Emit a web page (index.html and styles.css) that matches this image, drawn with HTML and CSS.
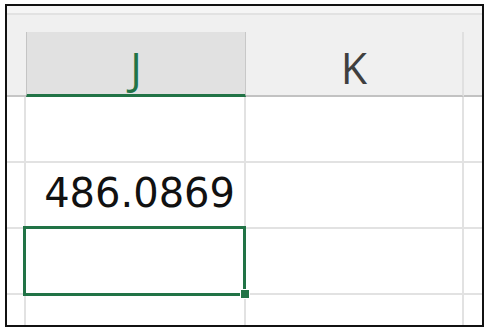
FILE: index.html
```html
<!DOCTYPE html>
<html lang="en">
<head>
  <meta charset="UTF-8" />
  <title>Sheet</title>
  <link rel="stylesheet" href="styles.css">
</head>
<body>
  <div class="frame">
    <div class="topbar"></div>
    <div class="gap"></div>

    <!-- Column headers -->
    <div class="row head">
      <div class="rh"></div>
      <div class="ch selected">J</div>
      <div class="ch">K</div>
      <div class="ch last"></div>
    </div>

    <!-- Cells -->
    <div class="row">
      <div class="rh"></div>
      <div class="cell"></div>
      <div class="cell"></div>
      <div class="cell last"></div>
    </div>
    <div class="row">
      <div class="rh"></div>
      <div class="cell num">486.0869</div>
      <div class="cell"></div>
      <div class="cell last"></div>
    </div>
    <div class="row">
      <div class="rh"></div>
      <div class="cell active"><span class="handle"></span></div>
      <div class="cell"></div>
      <div class="cell last"></div>
    </div>
    <div class="row">
      <div class="rh"></div>
      <div class="cell"></div>
      <div class="cell"></div>
      <div class="cell last"></div>
    </div>
  </div>
</body>
</html>
```

FILE: styles.css
```css
* {
  box-sizing: border-box;
}

body {
  margin: 0;
  background: #fff;
  font-family: "Open Sans", Arial, sans-serif;
}

.frame {
  margin: 4px 0 0 5px;
  width: 479px;
  height: 323px;
  border: 2px solid #111;
  overflow: hidden;
  background: #fff;
}

.topbar {
  height: 9px;
  background: #f5f5f5;
  border-bottom: 2px solid #e2e2e2;
}

.gap {
  height: 17px;
  background: #f0f0f0;
}

.row {
  display: grid;
  grid-template-columns: 19px 220px 218px 1fr;
  height: 66px;
}

.row.head {
  height: 65px;
}

.rh {
  border-right: 2px solid #e2e2e2;
  border-bottom: 2px solid #e2e2e2;
}

.head .rh {
  background: #f0f0f0;
  border-right: none;
  border-bottom: 2px solid #c6c6c6;
}

.ch {
  display: flex;
  justify-content: center;
  padding-top: 14px;
  background: #f0f0f0;
  color: #3f3f3f;
  font-size: 43px;
  line-height: 1;
  border-right: 2px solid #e0e0e0;
  border-bottom: 2px solid #c2c2c2;
}

.ch.selected {
  background: #e1e1e1;
  color: #217346;
  border-left: 1px solid #c4c4c4;
  border-right: 1px solid #c8c8c8;
  border-bottom: 3px solid #217346;
}

.ch.last,
.cell.last {
  border-right: none;
}

.cell {
  position: relative;
  border-right: 2px solid #e2e2e2;
  border-bottom: 2px solid #e2e2e2;
}

.cell.num {
  display: flex;
  align-items: flex-end;
  justify-content: flex-end;
  padding: 0 9px 14px 0;
  font-family: "DejaVu Sans", sans-serif;
  font-size: 40px;
  line-height: 1;
  color: #111;
}

.cell.active::after {
  content: "";
  position: absolute;
  top: -3px;
  left: -3px;
  right: -2px;
  bottom: -3px;
  border: 3px solid #217346;
}

.handle {
  position: absolute;
  right: -6px;
  bottom: -6px;
  width: 10px;
  height: 10px;
  background: #217346;
  border: 1px solid #fff;
  z-index: 1;
}
```
